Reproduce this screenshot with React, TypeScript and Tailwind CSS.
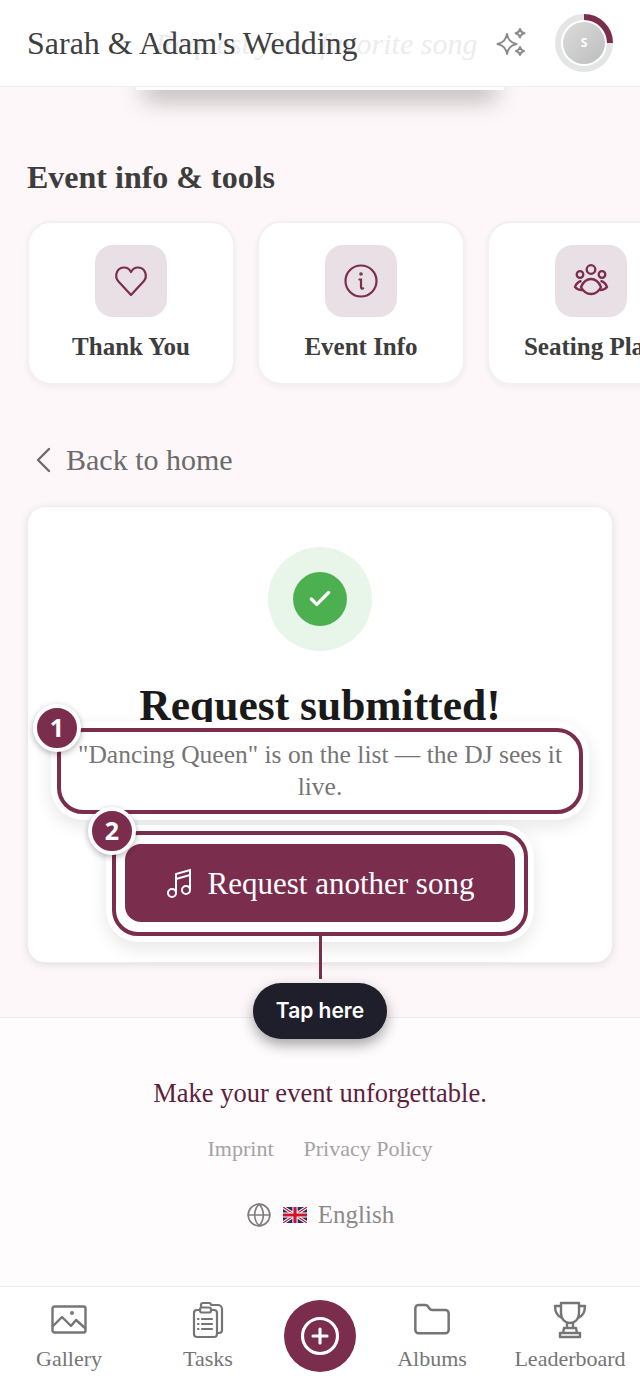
import React from "react";
import { Globe, Check, Folder, CirclePlus } from "lucide-react";

const serif = "font-['Liberation_Serif',serif]";

function HeartIcon() {
  return (
    <svg width="36" height="36" viewBox="0 0 36 36" fill="none" stroke="#7b2d4e" strokeWidth="2.200" strokeLinejoin="round">
      <path d="M18 32L5.500 18.500C1 13.500 3.500 5 10.500 4.500C13.500 4.300 16.500 6 18 9C19.500 6 22.500 4.300 25.500 4.500C32.500 5 35 13.500 30.500 18.500L18 32Z" />
    </svg>
  );
}

function InfoIcon() {
  return (
    <svg width="36" height="36" viewBox="0 0 36 36" fill="none" stroke="#7b2d4e" strokeWidth="2.200" strokeLinecap="round">
      <circle cx="18" cy="18" r="15.500" />
      <path d="M16.500 16.500H18V24c0 1.500 1 2 2.200 1.300" />
      <circle cx="18" cy="11" r="0.700" fill="#7b2d4e" />
    </svg>
  );
}

function SeatingIcon() {
  return (
    <svg width="36" height="36" viewBox="0 0 36 36" fill="none" stroke="#7b2d4e" strokeWidth="2.300">
      <circle cx="18" cy="6.500" r="4.300" />
      <circle cx="7" cy="11.500" r="3.300" />
      <circle cx="29" cy="11.500" r="3.300" />
      <path d="M18 16c5 0 8 3.500 10 8-2 4-5 7-10 7s-8-3-10-7c2-4.500 5-8 10-8Z" />
      <path d="M8.500 18c-3 .5-5.500 3-6.500 6 1.500 2 4 3 7 3M27.500 18c3 .5 5.500 3 6.500 6-1.500 2-4 3-7 3" />
    </svg>
  );
}

function ToolCard({ label, icon }: { label: string; icon: React.ReactNode }) {
  return (
    <div className="w-[208px] h-[164px] shrink-0 rounded-[24px] bg-white border-2 border-[#f4eff1] shadow-[0_2px_6px_rgba(0,0,0,0.05)] flex flex-col items-center pt-[22px]">
      <div className="w-[72px] h-[72px] rounded-[18px] bg-[#e9e0e5] flex items-center justify-center">{icon}</div>
      <div className="mt-[14px] text-[25px] leading-[32px] font-bold text-[#3d3d3d] whitespace-nowrap">{label}</div>
    </div>
  );
}

function Badge({ n, className }: { n: string; className: string }) {
  return (
    <div className={`absolute w-[48px] h-[48px] rounded-full bg-[#7b2d4e] border-[4px] border-white shadow-[0_2px_6px_rgba(0,0,0,0.3)] flex items-center justify-center text-white text-[25px] font-bold font-['Open_Sans',sans-serif] ${className}`}>
      {n}
    </div>
  );
}

function NavItem({ label, icon, className }: { label: string; icon: React.ReactNode; className: string }) {
  return (
    <div className={`flex flex-col items-center ${className}`}>
      <div className="h-[40px] flex items-center justify-center">{icon}</div>
      <div className="mt-[5px] text-[22px] leading-[28px] text-[#757575] whitespace-nowrap">{label}</div>
    </div>
  );
}

function GalleryIcon() {
  return (
    <svg width="36" height="30" viewBox="0 0 36 30" fill="none" stroke="#757575" strokeWidth="2.400" strokeLinejoin="round" strokeLinecap="round">
      <rect x="1.500" y="1.500" width="33" height="26" rx="2" />
      <path d="M2 21l9-9 9 9 5-6 9 8" />
      <circle cx="21" cy="8" r="0.800" fill="#757575" />
    </svg>
  );
}

function TasksIcon() {
  return (
    <svg width="32" height="38" viewBox="0 0 32 38" fill="none" stroke="#757575" strokeWidth="2.200" strokeLinejoin="round" strokeLinecap="round">
      <path d="M9 6V4a2 2 0 0 1 2-2h6a2 2 0 0 1 2 2h7a4 4 0 0 1 4 4v21a3 3 0 0 1-3 3h-2" />
      <rect x="2" y="9" width="23" height="27" rx="3" />
      <rect x="8" y="6.500" width="11" height="5" rx="2" fill="#fff" />
      <path d="M10 18h10M10 23h10M10 28h10M6 18h.5M6 23h.5M6 28h.5" />
    </svg>
  );
}

function TrophyIcon() {
  return (
    <svg width="34" height="38" viewBox="0 0 34 38" fill="none" stroke="#757575" strokeWidth="2.400" strokeLinejoin="round" strokeLinecap="round">
      <path d="M8 2h18v10c0 6-4 10-9 10S8 18 8 12V2Z" />
      <path d="M8 5H2c0 6 2 10 7 12M26 5h6c0 6-2 10-7 12" />
      <path d="M14 22v5h6v-5M11 27h12l1 5H10l1-5ZM7 36h20v-4H7v4Z" />
    </svg>
  );
}

function Sparkle() {
  return (
    <svg width="32" height="32" viewBox="0 0 32 32" fill="none" stroke="#8c8c8c" strokeWidth="2" strokeLinejoin="round">
      <path d="M11 7c1.200 6 3.500 8.500 9.500 10-6 1.500-8.300 4-9.500 10-1.200-6-3.500-8.500-9.500-10C7.500 15.500 9.800 13 11 7Z" />
      <path d="M24 2c.5 2.600 1.500 3.700 4.500 4.300-3 .6-4 1.700-4.500 4.300-.5-2.600-1.500-3.700-4.500-4.300 3-.6 4-1.700 4.500-4.300Z" />
      <path d="M24 20c.5 2.400 1.500 3.400 4 4-2.500.6-3.500 1.600-4 4-.5-2.400-1.500-3.400-4-4 2.500-.6 3.500-1.600 4-4Z" />
    </svg>
  );
}

function NotesIcon() {
  return (
    <svg width="26" height="30" viewBox="0 0 26 30" fill="none" stroke="#fff" strokeWidth="2">
      <circle cx="6" cy="25" r="4" />
      <circle cx="20" cy="22" r="4" />
      <path d="M10 25V6l14-4v20M10 11l14-4" />
    </svg>
  );
}

function BackChevron() {
  return (
    <svg width="16" height="26" viewBox="0 0 16 26" fill="none" stroke="#6b6b6b" strokeWidth="2.400" strokeLinecap="round" strokeLinejoin="round">
      <path d="M14 2L3 13l11 11" />
    </svg>
  );
}

function UkFlag() {
  return (
    <svg width="24" height="16" viewBox="0 0 60 40">
      <rect width="60" height="40" fill="#1f2f6e" />
      <path d="M0 0l60 40M60 0L0 40" stroke="#fff" strokeWidth="8" />
      <path d="M0 0l60 40M60 0L0 40" stroke="#cf142b" strokeWidth="3" />
      <path d="M30 0v40M0 20h60" stroke="#fff" strokeWidth="13" />
      <path d="M30 0v40M0 20h60" stroke="#cf142b" strokeWidth="8" />
    </svg>
  );
}

export default function App() {
  return (
    <div className={`relative w-[640px] h-[1385px] overflow-hidden bg-[#fef7f9] flex flex-col ${serif}`}>
      <header className="relative z-20 h-[87px] shrink-0 bg-white border-b border-[#efeced] flex items-center pl-[27px] pr-[27px]">
        <span className="absolute left-[155px] top-[24px] italic text-[30px] leading-[40px] text-[#ececec] whitespace-nowrap">Request your favorite song</span>
        <h1 className="relative text-[32px] leading-[44px] text-[#3f3f3f] whitespace-nowrap">Sarah &amp; Adam's Wedding</h1>
        <div className="ml-auto flex items-center gap-[27px]">
          <Sparkle />
          <div className="relative w-[58px] h-[58px]">
            <svg width="58" height="58" viewBox="0 0 58 58" className="absolute inset-0">
              <circle cx="29" cy="29" r="26" fill="none" stroke="#e4e5e7" strokeWidth="6" />
              <path d="M29 3A26 26 0 0 1 55 29" fill="none" stroke="#7b2d4e" strokeWidth="6" />
            </svg>
            <div className="absolute left-[8px] top-[8px] w-[42px] h-[42px] rounded-full bg-gradient-to-br from-[#dcdcdc] to-[#bdbdbd] flex items-center justify-center text-[12px] font-bold text-white font-['Open_Sans',sans-serif]">S</div>
          </div>
        </div>
      </header>

      <div className="relative z-10 mx-auto -mt-[30px] w-[368px] h-[33px] bg-white shadow-[0_16px_24px_-8px_rgba(0,0,0,0.35)] shrink-0" />

      <main className="flex-1 min-h-0 flex flex-col">
        <h2 className="pl-[27px] mt-[67px] text-[32px] leading-[40px] font-bold text-[#3d3d3d]">Event info &amp; tools</h2>
        <div className="mt-[24px] pl-[27px] flex gap-[22px]">
          <ToolCard label="Thank You" icon={<HeartIcon />} />
          <ToolCard label="Event Info" icon={<InfoIcon />} />
          <ToolCard label="Seating Plan" icon={<SeatingIcon />} />
        </div>

        <div className="mt-[55px] pl-[35px] flex items-center h-[40px] gap-[15px]">
          <BackChevron />
          <span className="text-[30px] leading-[40px] text-[#6b6b6b]">Back to home</span>
        </div>

        <section className="relative mx-[27px] mt-[26px] h-[457px] rounded-[18px] bg-white border border-[#efeced] shadow-[0_2px_8px_rgba(0,0,0,0.1)] flex flex-col items-center pt-[40px]">
          <div className="w-[104px] h-[104px] rounded-full bg-[#e8f5e9] flex items-center justify-center">
            <div className="w-[54px] h-[54px] rounded-full bg-[#4caf50] flex items-center justify-center">
              <Check size={26} strokeWidth={3} color="#fff" />
            </div>
          </div>
          <h3 className="mt-[32px] text-[43.500px] leading-[44px] font-bold text-[#1a1a1a] whitespace-nowrap">Request submitted!</h3>

          <div className="relative z-10 mt-[1px] w-[526px] h-[86px] rounded-[26px] bg-white border-[4px] border-[#7b2d4e] shadow-[0_0_0_6px_#fff,0_6px_18px_6px_rgba(0,0,0,0.1)] px-[8px] pt-[7px] text-center text-[25.500px] leading-[32px] text-[#757575]">
            "Dancing Queen" is on the list — the DJ sees it live.
          </div>
          <Badge n="1" className="z-20 left-[5px] top-[197px]" />

          <div className="relative z-10 mt-[17px] w-[416px] h-[105px] rounded-[26px] bg-white border-[4px] border-[#7b2d4e] shadow-[0_0_0_6px_#fff,0_6px_18px_6px_rgba(0,0,0,0.1)] flex items-center justify-center">
            <div className="mb-[1px] w-[390px] h-[78px] rounded-[16px] bg-[#7b2d4e] flex items-center justify-center gap-[16px] text-white text-[31px]">
              <NotesIcon />
              <span className="mt-[2px] whitespace-nowrap">Request another song</span>
            </div>
          </div>
          <Badge n="2" className="z-20 left-[60px] top-[300px]" />
          <div className="absolute z-10 left-[291px] top-[428px] w-[3px] h-[44px] bg-[#7b2d4e]" />
        </section>

        <footer className="relative mt-[54px] h-[269px] bg-[#fffcfd] border-t border-[#eeeaeb] flex flex-col items-center">
          <div className="absolute z-20 left-[253px] top-[-35px] w-[134px] h-[56px] rounded-full bg-[#1e1f2b] shadow-[0_6px_14px_rgba(0,0,0,0.35)] flex items-center justify-center text-white text-[21px] font-semibold font-['Inter',sans-serif]">Tap here</div>
          <div className="mt-[57px] text-[26.500px] leading-[36px] text-[#5e1f3d] whitespace-nowrap">Make your event unforgettable.</div>
          <div className="mt-[23px] flex gap-[30px] text-[22px] leading-[30px] text-[#a3a3a3] whitespace-nowrap">
            <span>Imprint</span>
            <span>Privacy Policy</span>
          </div>
          <div className="mt-[33px] flex items-center gap-[11px] text-[25px] leading-[36px] text-[#8a8a8a]">
            <Globe size={26} strokeWidth={1.500} color="#7d7d7d" />
            <UkFlag />
            <span>English</span>
          </div>
        </footer>
      </main>

      <nav className="relative h-[99px] shrink-0 bg-white border-t border-[#eeeaeb] flex items-start pt-[13px]">
        <NavItem label="Gallery" icon={<GalleryIcon />} className="w-[138px]" />
        <NavItem label="Tasks" icon={<TasksIcon />} className="w-[140px]" />
        <div className="ml-[6px] w-[72px] h-[72px] rounded-full bg-[#7b2d4e] flex items-center justify-center">
          <CirclePlus size={42} strokeWidth={1.800} color="#fff" />
        </div>
        <NavItem label="Albums" icon={<Folder size={40} strokeWidth={1.500} color="#757575" />} className="w-[152px]" />
        <NavItem label="Leaderboard" icon={<TrophyIcon />} className="w-[124px]" />
      </nav>
    </div>
  );
}
